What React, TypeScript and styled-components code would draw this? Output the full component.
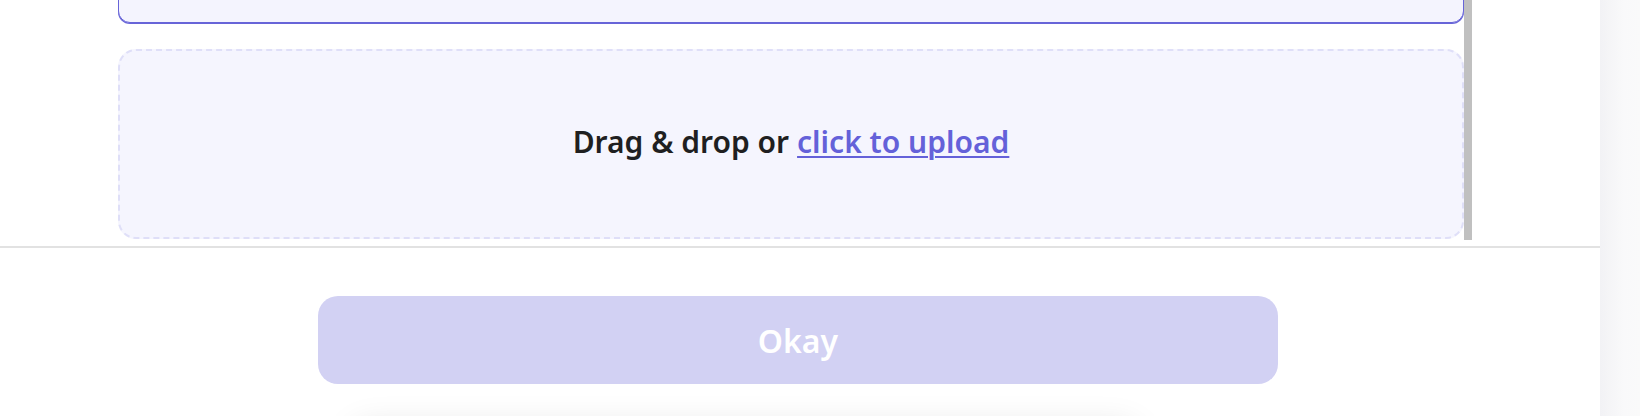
import React from "react";
import styled, { createGlobalStyle } from "styled-components";

const GlobalStyle = createGlobalStyle`
  html, body {
    margin: 0;
    padding: 0;
    background: #ffffff;
    overflow: hidden;
  }
  * {
    box-sizing: border-box;
  }
`;

const Page = styled.div`
  display: flex;
  width: 1640px;
  height: 416px;
  overflow: hidden;
  font-family: "Noto Sans", "Open Sans", Arial, sans-serif;
`;

const Modal = styled.div`
  width: 1600px;
  display: flex;
  flex-direction: column;
  background: #ffffff;
`;

const Backdrop = styled.div`
  flex: 1;
  background: linear-gradient(to right, #f2f2f5, #f9f9fa 60%, #fafafa);
`;

const Body = styled.div`
  flex-shrink: 0;
  height: 240px;
  display: flex;
  padding: 0 128px 0 118px;
`;

const ScrollContent = styled.div`
  flex: 1;
  display: flex;
  flex-direction: column;
  justify-content: flex-end;
  gap: 26px;
  overflow: hidden;
  padding-bottom: 1px;
`;

const ScrollThumb = styled.div`
  width: 8px;
  background: #c0c0c0;
`;

const Field = styled.div`
  flex-shrink: 0;
  height: 120px;
  background: #f4f4fe;
  border: 1px solid #6764d8;
  border-radius: 12px;
  box-shadow: 0 1px 0 #6764d8;
`;

const DropZone = styled.div`
  flex-shrink: 0;
  height: 190px;
  display: flex;
  align-items: center;
  justify-content: center;
  padding-bottom: 6px;
  background: #f5f5fe;
  border: 2px dashed #dfdff8;
  border-radius: 18px;
  font-size: 30px;
  font-weight: 600;
  color: #1f1f21;
`;

const UploadLink = styled.a`
  margin-left: 8px;
  color: #6461d9;
  text-decoration: underline;
  text-decoration-thickness: 2px;
  text-underline-offset: 3px;
  cursor: pointer;
`;

const Divider = styled.div`
  flex-shrink: 0;
  height: 2px;
  margin-top: 6px;
  background: #e2e2e2;
`;

const Footer = styled.div`
  flex: 1;
  min-height: 0;
  display: flex;
  flex-direction: column;
  align-items: center;
  padding: 48px 4px 0 0;
`;

const OkayButton = styled.button`
  flex-shrink: 0;
  width: 960px;
  height: 88px;
  border: none;
  border-radius: 20px;
  background: #d2d1f3;
  color: #ffffff;
  font-family: inherit;
  font-size: 32px;
  font-weight: 600;
  cursor: not-allowed;
`;

const PeekCard = styled.div`
  flex-shrink: 0;
  align-self: flex-start;
  margin: 40px 0 0 350px;
  width: 790px;
  height: 60px;
  background: #ffffff;
  border-radius: 20px;
  box-shadow: 0 0 32px rgba(0, 0, 0, 0.1);
`;

export default function App() {
  return (
    <>
      <GlobalStyle />
      <Page>
        <Modal>
          <Body>
            <ScrollContent>
              <Field />
              <DropZone>
                Drag &amp; drop or <UploadLink>click to upload</UploadLink>
              </DropZone>
            </ScrollContent>
            <ScrollThumb />
          </Body>
          <Divider />
          <Footer>
            <OkayButton disabled>Okay</OkayButton>
            <PeekCard />
          </Footer>
        </Modal>
        <Backdrop />
      </Page>
    </>
  );
}
